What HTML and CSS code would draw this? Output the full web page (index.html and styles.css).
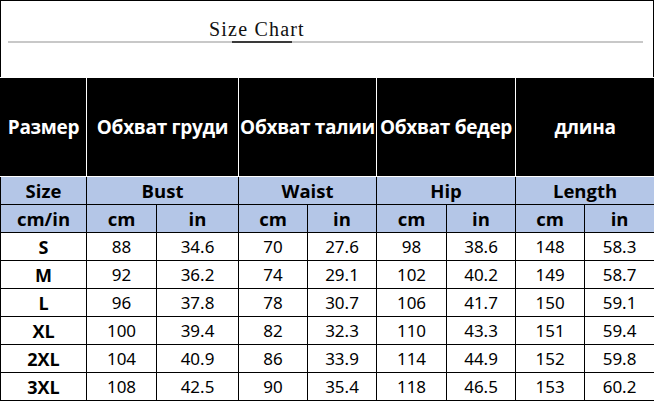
FILE: index.html
```html
<!DOCTYPE html>
<html>
<head>
<meta charset="utf-8">
<link rel="stylesheet" href="styles.css">
</head>
<body>
<div class="title-box">
  <div class="title">Size Chart</div>
  <div class="rule"><span class="rule-dark"></span></div>
</div>
<table class="chart">
  <colgroup>
    <col class="c0"><col class="c1"><col class="c2"><col class="c3"><col class="c4"><col class="c5"><col class="c6"><col class="c7"><col class="c8">
  </colgroup>
  <tr class="ru">
    <td>Размер</td>
    <td colspan="2">Обхват груди</td>
    <td colspan="2">Обхват талии</td>
    <td colspan="2">Обхват бедер</td>
    <td colspan="2">длина</td>
  </tr>
  <tr class="en">
    <td>Size</td>
    <td colspan="2">Bust</td>
    <td colspan="2">Waist</td>
    <td colspan="2">Hip</td>
    <td colspan="2">Length</td>
  </tr>
  <tr class="en">
    <td>cm/in</td>
    <td>cm</td><td>in</td><td>cm</td><td>in</td><td>cm</td><td>in</td><td>cm</td><td>in</td>
  </tr>
  <tr class="data"><th>S</th><td>88</td><td>34.6</td><td>70</td><td>27.6</td><td>98</td><td>38.6</td><td>148</td><td>58.3</td></tr>
  <tr class="data"><th>M</th><td>92</td><td>36.2</td><td>74</td><td>29.1</td><td>102</td><td>40.2</td><td>149</td><td>58.7</td></tr>
  <tr class="data"><th>L</th><td>96</td><td>37.8</td><td>78</td><td>30.7</td><td>106</td><td>41.7</td><td>150</td><td>59.1</td></tr>
  <tr class="data"><th>XL</th><td>100</td><td>39.4</td><td>82</td><td>32.3</td><td>110</td><td>43.3</td><td>151</td><td>59.4</td></tr>
  <tr class="data"><th>2XL</th><td>104</td><td>40.9</td><td>86</td><td>33.9</td><td>114</td><td>44.9</td><td>152</td><td>59.8</td></tr>
  <tr class="data"><th>3XL</th><td>108</td><td>42.5</td><td>90</td><td>35.4</td><td>118</td><td>46.5</td><td>153</td><td>60.2</td></tr>
</table>
</body>
</html>
```

FILE: styles.css
```css
html, body {
  margin: 0;
  padding: 0;
  background: #fff;
}
body {
  width: 654px;
  font-family: "Open Sans", "Noto Sans", sans-serif;
}
.title-box {
  box-sizing: border-box;
  width: 654px;
  height: 77px;
  border: 1px solid #000;
  border-bottom: none;
  padding-top: 17px;
}
.title {
  font-family: "Liberation Serif", serif;
  font-size: 20px;
  letter-spacing: 1.2px;
  line-height: 23px;
  color: #111;
  padding-left: 208px;
}
.rule {
  margin: 0 10px 0 7px;
  height: 2px;
  background: #c8c8c8;
  position: relative;
}
.rule-dark {
  position: absolute;
  left: 224px;
  width: 60px;
  top: 0;
  height: 2px;
  background: #3a3a3a;
}
.chart {
  width: 654px;
  table-layout: fixed;
  border-collapse: collapse;
}
.c0 { width: 86px; }
.c1 { width: 70px; }
.c2 { width: 82px; }
.c3 { width: 69px; }
.c4 { width: 69px; }
.c5 { width: 70px; }
.c6 { width: 69px; }
.c7 { width: 69px; }
.c8 { width: 70px; }
.chart td, .chart th {
  padding: 0;
  text-align: center;
  white-space: nowrap;
  overflow: hidden;
}
.ru td {
  height: 98px;
  background: #000;
  color: #fff;
  border: 1px solid #fff;
  font-weight: 700;
  font-size: 19px;
  letter-spacing: -0.3px;
}
.ru td:first-child { border-left-color: #000; }
.ru td:last-child { border-right-color: #000; }
.en td {
  height: 27px;
  background: #b4c6e7;
  border: 1px solid #000;
  font-weight: 700;
  font-size: 18.5px;
  color: #000;
}
.data td, .data th {
  height: 27px;
  border: 1px solid #000;
  color: #000;
  font-size: 17px;
}
.data td {
  font-family: "Noto Sans", "DejaVu Sans", sans-serif;
  font-weight: 400;
}
.data th {
  font-weight: 700;
  font-size: 18px;
}
```
